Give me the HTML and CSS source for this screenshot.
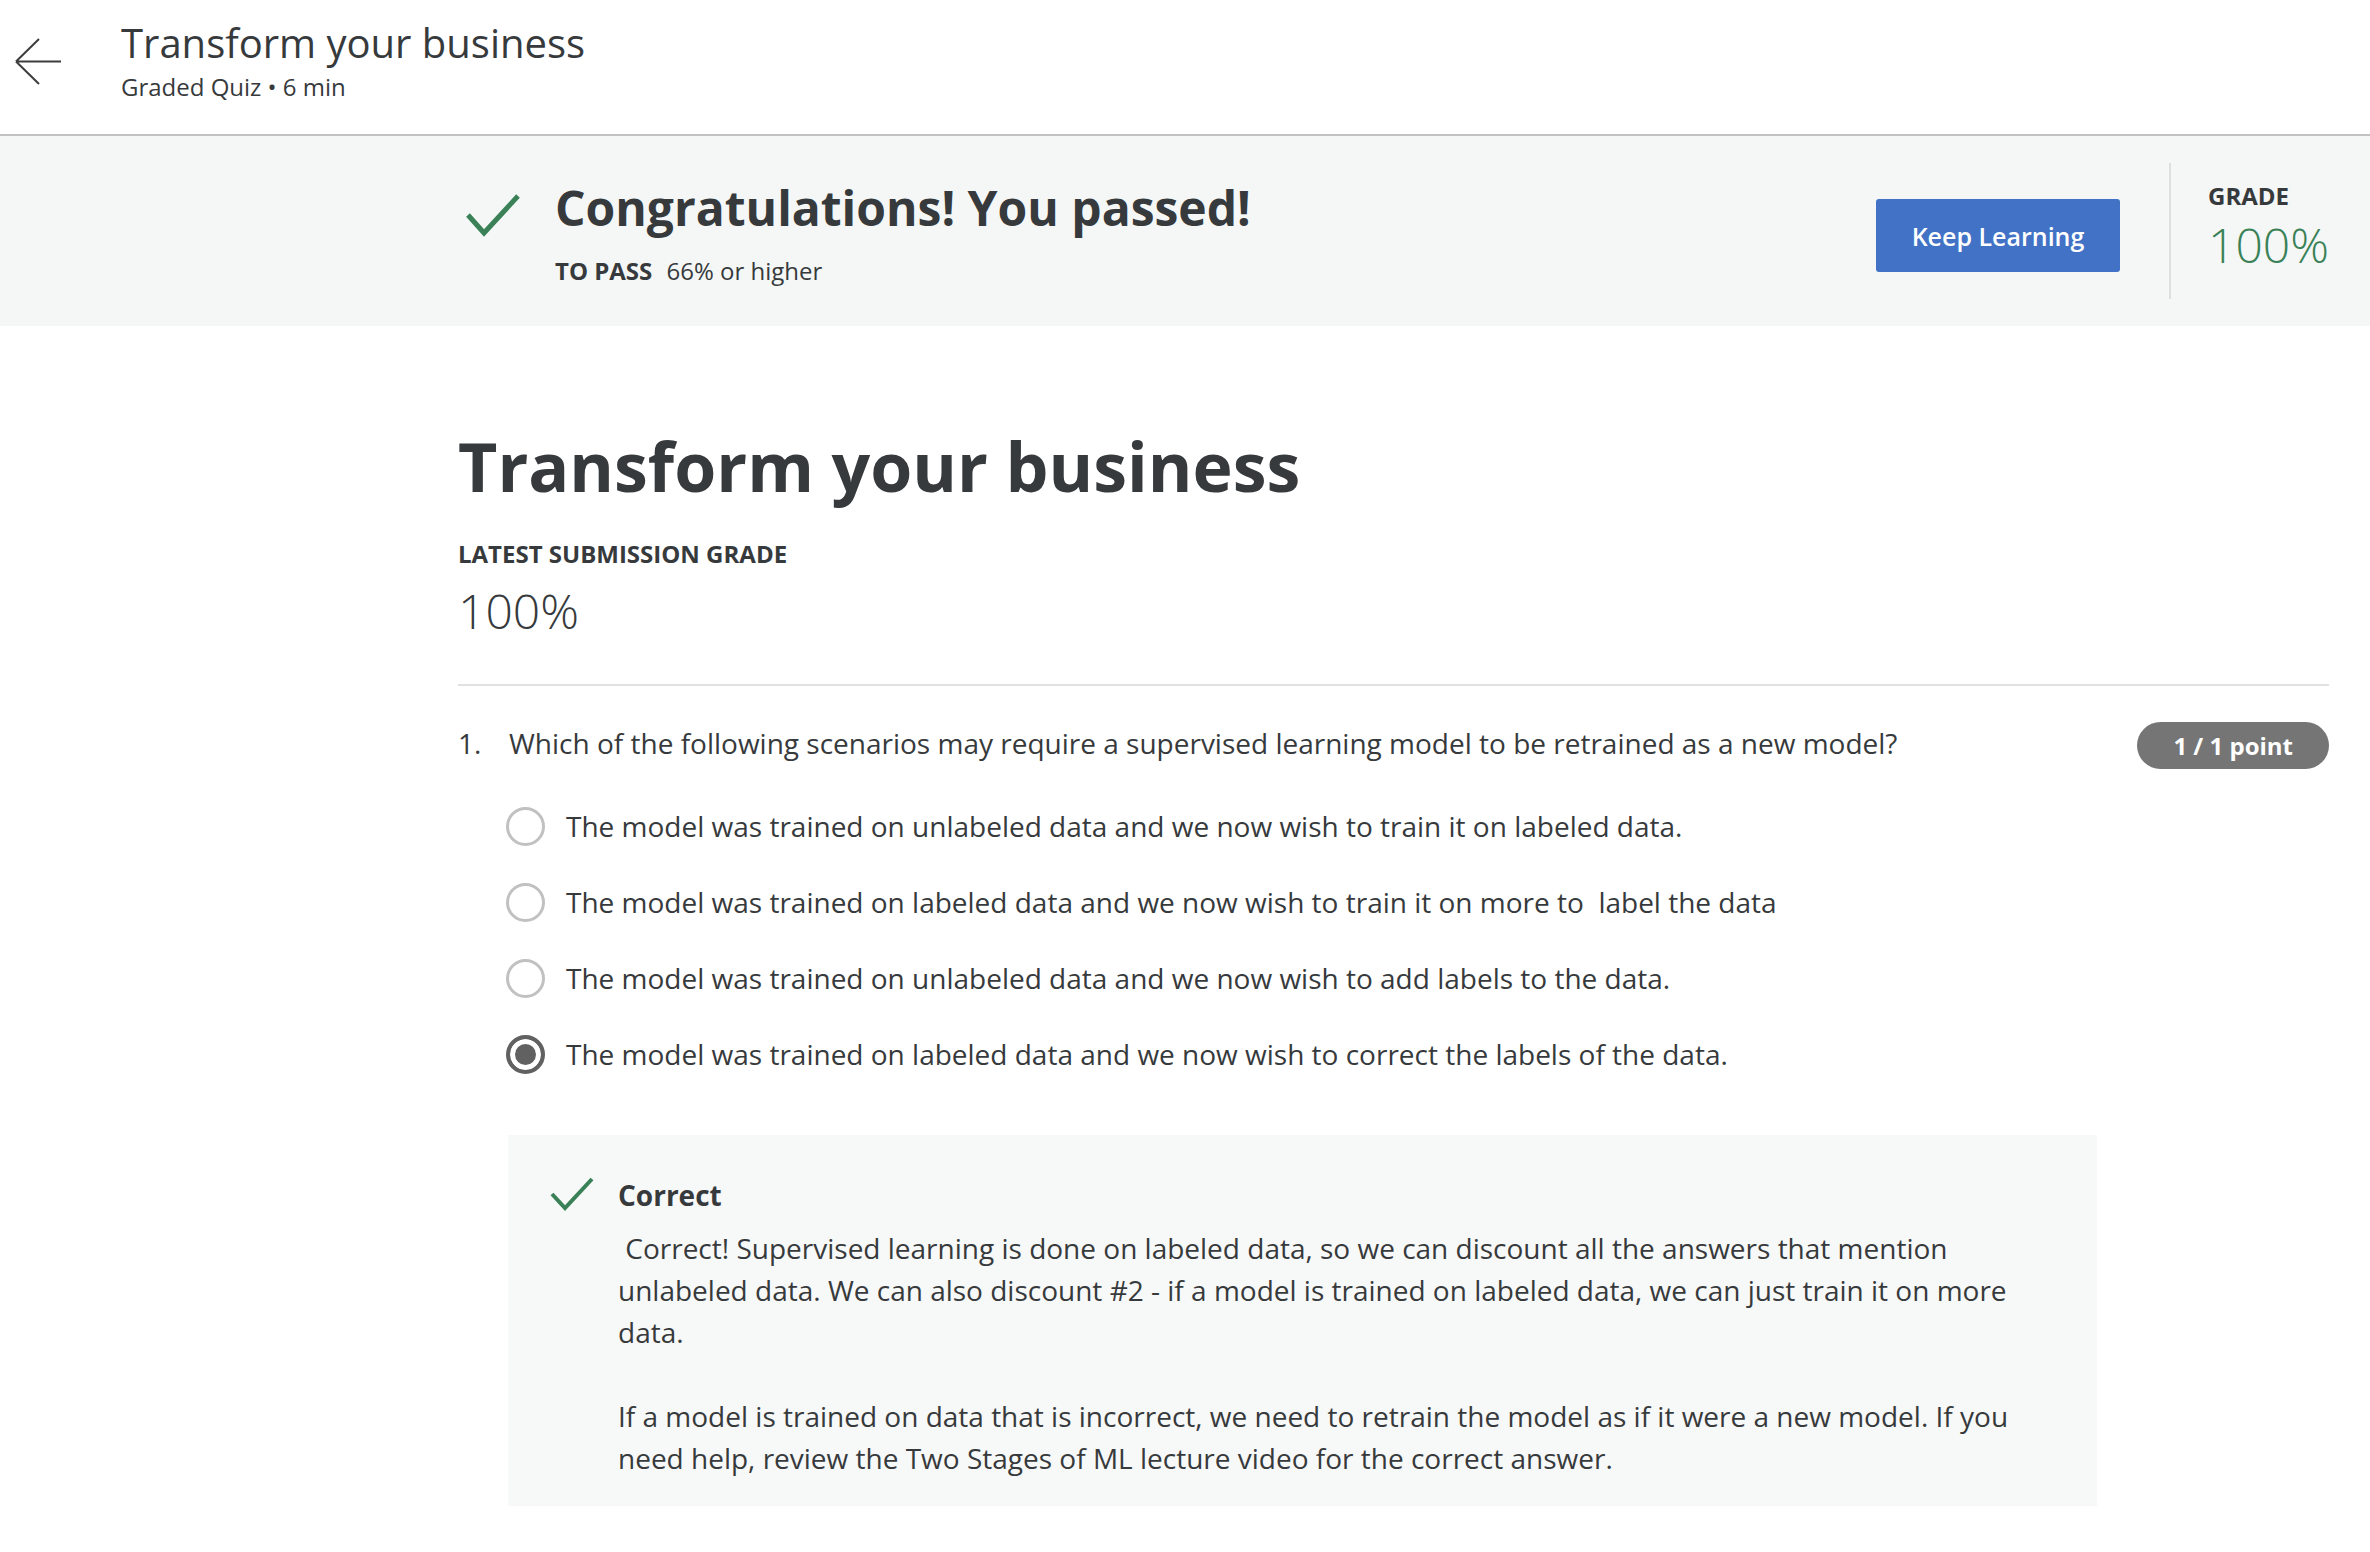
FILE: index.html
```html
<!DOCTYPE html>
<html lang="en">
<head>
<meta charset="utf-8">
<title>Transform your business</title>
<link rel="stylesheet" href="styles.css">
</head>
<body>
<header class="topbar">
  <svg class="back-icon" width="48" height="48" viewBox="0 0 48 48" aria-hidden="true">
    <path d="M47 23.5H2M2 23.5L25 1M2 23.5L25 46" fill="none" stroke="#3d3d3d" stroke-width="2"/>
  </svg>
  <div class="topbar-text">
    <div class="topbar-title">Transform your business</div>
    <div class="topbar-sub">Graded Quiz • 6 min</div>
  </div>
</header>

<section class="banner">
  <div class="content banner-inner">
    <div class="banner-left">
      <svg class="banner-check" width="56" height="44" viewBox="0 0 56 44" aria-hidden="true">
        <polyline points="3,22 19,40 53,3" fill="none" stroke="#3a8157" stroke-width="5"/>
      </svg>
      <div class="banner-text">
        <div class="banner-title">Congratulations! You passed!</div>
        <div class="banner-pass"><span class="pass-label">TO PASS</span> 66% or higher</div>
      </div>
    </div>
    <div class="banner-right">
      <button class="btn-primary">Keep Learning</button>
      <div class="vdivider"></div>
      <div class="grade-box">
        <div class="grade-label">GRADE</div>
        <div class="grade-value">100%</div>
      </div>
    </div>
  </div>
</section>

<main class="content main">
  <h1 class="quiz-title">Transform your business</h1>
  <div class="sub-label">LATEST SUBMISSION GRADE</div>
  <div class="sub-grade">100%</div>
  <hr class="rule">

  <div class="question">
    <div class="q-num">1.</div>
    <div class="q-text">Which of the following scenarios may require a supervised learning model to be retrained as a new model?</div>
    <div class="points">1 / 1 point</div>
  </div>

  <div class="options">
    <div class="option"><span class="radio"></span><span class="opt-text">The model was trained on unlabeled data and we now wish to train it on labeled data.</span></div>
    <div class="option"><span class="radio"></span><span class="opt-text">The model was trained on labeled data and we now wish to train it on more to&nbsp; label the data</span></div>
    <div class="option"><span class="radio"></span><span class="opt-text">The model was trained on unlabeled data and we now wish to add labels to the data.</span></div>
    <div class="option"><span class="radio checked"></span><span class="opt-text">The model was trained on labeled data and we now wish to correct the labels of the data.</span></div>
  </div>

  <div class="feedback">
    <svg class="fb-check" width="44" height="34" viewBox="0 0 44 34" aria-hidden="true">
      <polyline points="2,17 15,31 42,2" fill="none" stroke="#3a8157" stroke-width="4"/>
    </svg>
    <div class="fb-body">
      <div class="fb-title">Correct</div>
      <p class="fb-text">&nbsp;Correct! Supervised learning is done on labeled data, so we can discount all the answers that mention unlabeled data. We can also discount #2 - if a model is trained on labeled data, we can just train it on more data.</p>
      <p class="fb-text">If a model is trained on data that is incorrect, we need to retrain the model as if it were a new model. If you need help, review the Two Stages of ML lecture video for the correct answer.</p>
    </div>
  </div>
</main>
</body>
</html>
```

FILE: styles.css
```css
* { box-sizing: border-box; }

body {
  margin: 0;
  background: #ffffff;
  color: #373a3c;
  font-family: "Open Sans", "Noto Sans", "Liberation Sans", sans-serif;
}

.topbar {
  display: flex;
  align-items: flex-start;
  height: 136px;
  padding: 19px 0 0 14px;
  border-bottom: 2px solid #c2c2c2;
}

.back-icon { margin-top: 19px; flex-shrink: 0; }

.topbar-text { margin-left: 59px; }

.topbar-title {
  font-size: 40px;
  line-height: 48px;
  color: #373a3c;
}

.topbar-sub {
  font-size: 24px;
  line-height: 32px;
  margin-top: 4px;
  color: #373a3c;
}

.content {
  margin-left: 458px;
  width: 1871px;
}

.banner {
  background: #f4f7f6;
  height: 190px;
}

.banner-inner {
  display: flex;
  align-items: center;
  justify-content: space-between;
  height: 100%;
}

.banner-left {
  display: flex;
  align-items: flex-start;
  padding-top: 3px;
}

.banner-check { margin-left: 7px; margin-top: 15px; flex-shrink: 0; }

.banner-text { margin-left: 34px; }

.banner-title {
  font-size: 48px;
  line-height: 60px;
  font-weight: 700;
}

.banner-pass {
  font-size: 24px;
  line-height: 32px;
  margin-top: 17px;
}

.pass-label { font-weight: 700; margin-right: 8px; }

.banner-right {
  display: flex;
  align-items: center;
}

.btn-primary {
  width: 244px;
  height: 73px;
  margin-top: 9px;
  border: 0;
  border-radius: 3px;
  background: #4272c6;
  color: #ffffff;
  font-family: inherit;
  font-size: 25px;
  font-weight: 600;
}

.vdivider {
  width: 2px;
  height: 136px;
  background: #dedfdf;
  margin-left: 49px;
}

.grade-box {
  margin-left: 37px;
  margin-bottom: 5px;
  width: 121px;
}

.grade-label {
  font-size: 24px;
  line-height: 33px;
  font-weight: 700;
}

.grade-value {
  font-size: 48px;
  line-height: 66px;
  font-weight: 300;
  color: #3a8157;
}

.main { padding-top: 100px; }

.quiz-title {
  margin: 0;
  font-size: 68px;
  line-height: 80px;
  font-weight: 700;
}

.sub-label {
  margin-top: 32px;
  font-size: 24px;
  line-height: 32px;
  font-weight: 700;
}

.sub-grade {
  margin-top: 13px;
  font-size: 48px;
  line-height: 56px;
  font-weight: 300;
}

.rule {
  margin: 45px 0 0;
  border: 0;
  height: 2px;
  background: #e1e1e1;
}

.question {
  display: flex;
  align-items: flex-start;
  margin-top: 36px;
}

.q-num {
  width: 51px;
  flex-shrink: 0;
  font-size: 28px;
  line-height: 42px;
}

.q-text {
  flex: 1;
  font-size: 28px;
  line-height: 42px;
}

.points {
  flex-shrink: 0;
  height: 47px;
  padding: 0 36px;
  border-radius: 24px;
  background: #757575;
  color: #ffffff;
  font-size: 24px;
  line-height: 47px;
  font-weight: 700;
}

.options {
  margin-top: 19px;
  padding-left: 48px;
}

.option {
  display: flex;
  align-items: center;
  padding: 17px 0;
}

.radio {
  width: 39px;
  height: 39px;
  flex-shrink: 0;
  border: 3px solid #c1c1c1;
  border-radius: 50%;
  background: #ffffff;
}

.radio.checked {
  border: 4px solid #616161;
  box-shadow: inset 0 0 0 5px #ffffff;
  background: #616161;
}

.opt-text {
  margin-left: 21px;
  font-size: 28px;
  line-height: 42px;
}

.feedback {
  display: flex;
  align-items: flex-start;
  margin: 43px 0 0 50px;
  width: 1589px;
  padding: 39px 80px 27px 42px;
  background: #f7f8f8;
}

.fb-check { margin-top: 3px; flex-shrink: 0; }

.fb-body { margin-left: 24px; }

.fb-title {
  font-size: 28px;
  line-height: 42px;
  font-weight: 700;
}

.fb-text {
  margin: 0;
  font-size: 28px;
  line-height: 42px;
}

.fb-title + .fb-text { margin-top: 11px; }

.fb-text + .fb-text { margin-top: 42px; }
```
